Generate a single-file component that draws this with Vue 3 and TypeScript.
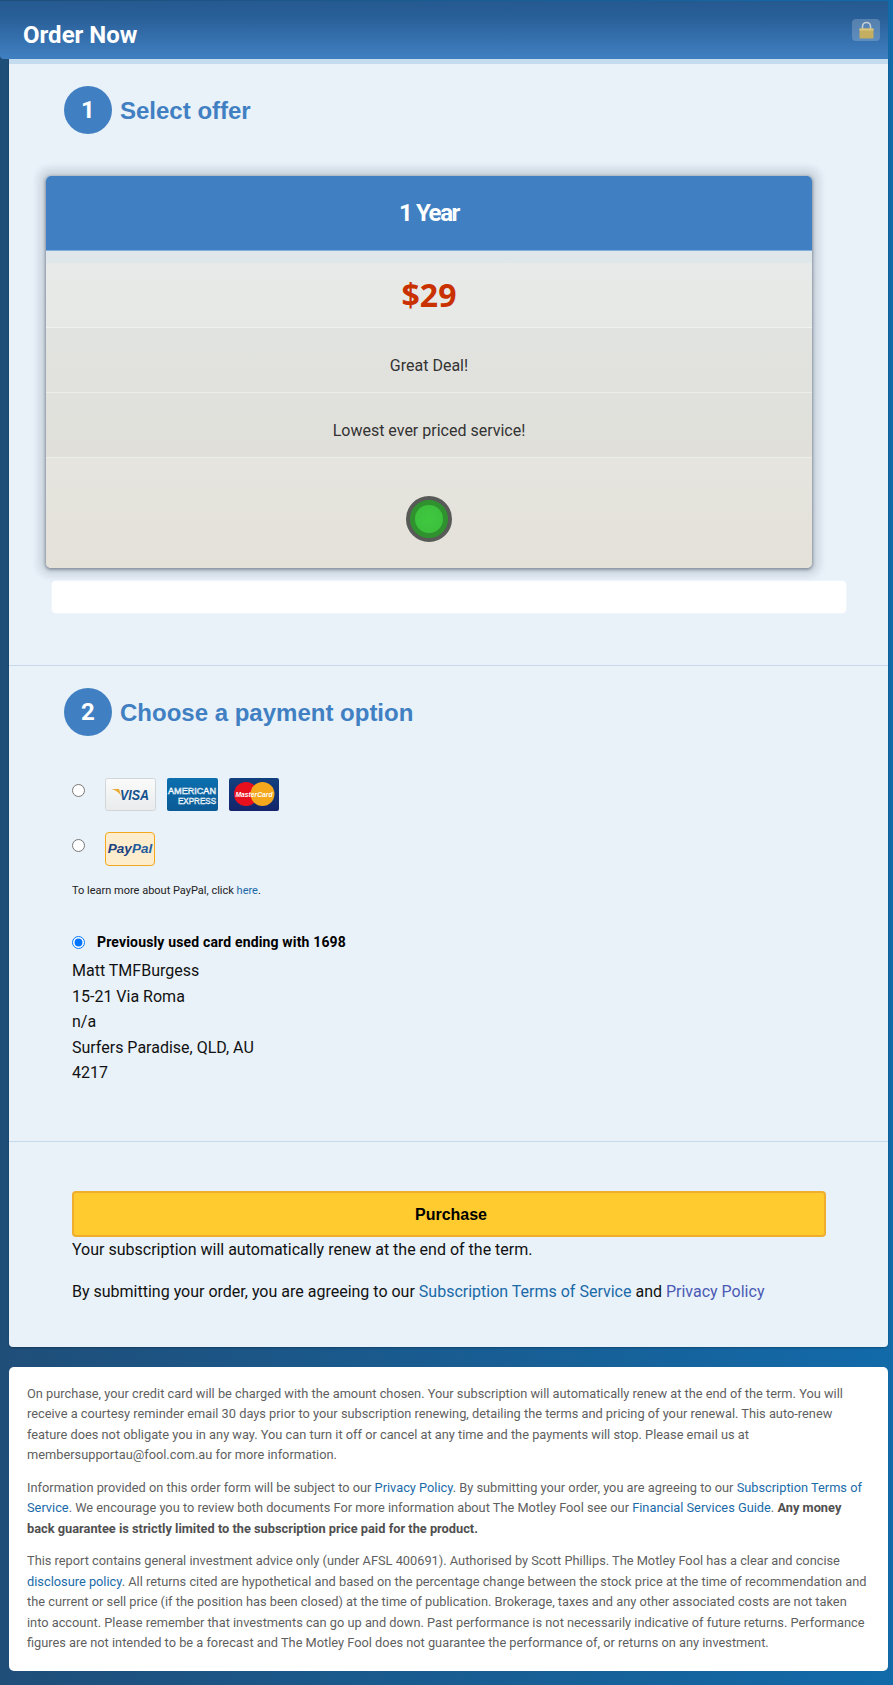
<template>
  <div class="page">
    <header class="top-bar">
      <h1 class="top-title">Order Now</h1>
      <span class="lock">
        <svg width="15" height="18" viewBox="0 0 15 18">
          <path d="M3.5 9V5.5a4 4 0 0 1 8 0V9" fill="none" stroke="#c9ced2" stroke-width="1.6" />
          <rect x="0.5" y="7.5" width="14" height="10" rx="1" fill="#c4ae62" />
          <rect x="0.5" y="7.5" width="14" height="2" fill="#d8c67f" />
        </svg>
      </span>
    </header>

    <main class="order-card">
      <section class="step step-offer">
        <div class="step-head">
          <span class="step-num">1</span>
          <h2 class="step-title">Select offer</h2>
        </div>
        <div class="offer">
          <div class="offer-name">1 Year</div>
          <div class="offer-gap"></div>
          <div class="offer-price">$29</div>
          <div class="offer-row">Great Deal!</div>
          <div class="offer-row">Lowest ever priced service!</div>
          <div class="offer-pick"><span class="led"><span class="led-core"></span></span></div>
        </div>
        <div class="notice"></div>
      </section>

      <section class="step step-pay">
        <div class="step-head">
          <span class="step-num">2</span>
          <h2 class="step-title">Choose a payment option</h2>
        </div>
        <div class="pay-row pay-cards">
          <input type="radio" name="pay" class="radio" />
          <div class="logos">
            <svg class="logo" width="51" height="33" viewBox="0 0 51 33">
              <defs>
                <linearGradient id="visaBg" x1="0" y1="0" x2="0" y2="1">
                  <stop offset="0" stop-color="#fbfbfb" />
                  <stop offset="1" stop-color="#e9ebec" />
                </linearGradient>
              </defs>
              <rect x="0.5" y="0.5" width="50" height="32" rx="2" fill="url(#visaBg)" stroke="#d3d6d8" />
              <path d="M6 11h8l2.5 8C15 15 11 12 6 11z" fill="#e8a92c" />
              <text x="15" y="22" class="visa-text" textLength="29" lengthAdjust="spacingAndGlyphs">VISA</text>
            </svg>
            <svg class="logo" width="51" height="33" viewBox="0 0 51 33">
              <defs>
                <linearGradient id="amexBg" x1="0" y1="0" x2="0" y2="1">
                  <stop offset="0" stop-color="#0c6fae" />
                  <stop offset="1" stop-color="#0a5a96" />
                </linearGradient>
              </defs>
              <rect width="51" height="33" rx="2" fill="url(#amexBg)" />
              <text x="1" y="15.5" class="amex-text" textLength="48" lengthAdjust="spacingAndGlyphs">AMERICAN</text>
              <text x="11" y="25.5" class="amex-text" textLength="38" lengthAdjust="spacingAndGlyphs">EXPRESS</text>
            </svg>
            <svg class="logo" width="50" height="33" viewBox="0 0 50 33">
              <defs>
                <linearGradient id="mcBg" x1="0" y1="0" x2="0" y2="1">
                  <stop offset="0" stop-color="#11407f" />
                  <stop offset="1" stop-color="#14246a" />
                </linearGradient>
              </defs>
              <rect width="50" height="33" rx="2" fill="url(#mcBg)" />
              <circle cx="17" cy="16" r="12" fill="#e8101c" />
              <circle cx="33.5" cy="16" r="12" fill="#f5a81c" />
              <text x="6.5" y="19" class="mc-text" textLength="37" lengthAdjust="spacingAndGlyphs">MasterCard</text>
            </svg>
          </div>
        </div>
        <div class="pay-row pay-paypal">
          <input type="radio" name="pay" class="radio" />
          <div class="paypal-logo"><em class="pp-dark">Pay</em><em class="pp-light">Pal</em></div>
        </div>
        <p class="paypal-note">To learn more about PayPal, click <a class="link">here</a>.</p>

        <label class="saved">
          <input type="radio" name="pay" class="radio" checked />
          <strong>Previously used card ending with 1698</strong>
        </label>
        <div class="address">
          <div v-for="line in addressLines" :key="line">{{ line }}</div>
        </div>
      </section>

      <section class="step step-buy">
        <button class="purchase" type="button">Purchase</button>
        <p class="renew">Your subscription will automatically renew at the end of the term.</p>
        <p class="agree">
          By submitting your order, you are agreeing to our
          <a class="link">Subscription Terms of Service</a> and
          <a class="link link-visited">Privacy Policy</a>
        </p>
      </section>
    </main>

    <footer class="legal">
      <p>On purchase, your credit card will be charged with the amount chosen. Your subscription will automatically renew at the end of the term. You will receive a courtesy reminder email 30 days prior to your subscription renewing, detailing the terms and pricing of your renewal. This auto-renew feature does not obligate you in any way. You can turn it off or cancel at any time and the payments will stop. Please email us at membersupportau@fool.com.au for more information.</p>
      <p>Information provided on this order form will be subject to our <a class="link">Privacy Policy</a>. By submitting your order, you are agreeing to our <a class="link">Subscription Terms of Service</a>. We encourage you to review both documents For more information about The Motley Fool see our <a class="link">Financial Services Guide</a>. <b>Any money back guarantee is strictly limited to the subscription price paid for the product.</b></p>
      <p>This report contains general investment advice only (under AFSL 400691). Authorised by Scott Phillips. The Motley Fool has a clear and concise <a class="link">disclosure policy</a>. All returns cited are hypothetical and based on the percentage change between the stock price at the time of recommendation and the current or sell price (if the position has been closed) at the time of publication. Brokerage, taxes and any other associated costs are not taken into account. Please remember that investments can go up and down. Past performance is not necessarily indicative of future returns. Performance figures are not intended to be a forecast and The Motley Fool does not guarantee the performance of, or returns on any investment.</p>
    </footer>
  </div>
</template>

<script setup lang="ts">
const addressLines: string[] = [
  'Matt TMFBurgess',
  '15-21 Via Roma',
  'n/a',
  'Surfers Paradise, QLD, AU',
  '4217'
]
</script>

<style>
html, body {
  margin: 0;
  background: #1a5c92;
}
</style>

<style scoped>
.page {
  min-height: 1685px;
  box-sizing: border-box;
  padding-top: 1px;
  padding-bottom: 13px;
  background: linear-gradient(90deg, #1f4e79 0%, #126aa9 100%);
  font-family: Roboto, "Liberation Sans", sans-serif;
}

.top-bar {
  height: 58px;
  margin-right: 5px;
  box-sizing: border-box;
  padding: 16px 8px 0 23px;
  display: flex;
  justify-content: space-between;
  align-items: flex-start;
  border-bottom-left-radius: 4px;
  background: linear-gradient(180deg, #245a90 0%, #2a6099 30%, #4080c2 100%);
}

.top-title {
  margin: 0;
  font-size: 24px;
  line-height: 36px;
  font-weight: 700;
  color: #fff;
}

.lock {
  width: 28px;
  height: 22px;
  margin-top: 2px;
  border-radius: 4px;
  background: rgba(255, 255, 255, 0.2);
  display: flex;
  align-items: center;
  justify-content: center;
}

.order-card {
  margin: 0 5px 0 9px;
  background: #e9f1f9;
  border-top: 5px solid #c5dbee;
  border-radius: 0 0 4px 4px;
  box-shadow: 0 1px 2px rgba(0, 0, 0, 0.25);
}

.step {
  border-bottom: 1px solid #c6d9ea;
}

.step:last-child {
  border-bottom: none;
}

.step-head {
  display: flex;
  align-items: center;
  gap: 8px;
  padding-left: 55px;
}

.step-num {
  width: 48px;
  height: 48px;
  border-radius: 50%;
  background: #4080c2;
  color: #fff;
  font-size: 24px;
  font-weight: 700;
  display: flex;
  align-items: center;
  justify-content: center;
}

.step-title {
  margin: 2px 0 0;
  font-family: "Liberation Sans", Arial, sans-serif;
  font-size: 24px;
  font-weight: 700;
  color: #4080c2;
}

.step-offer {
  height: 602px;
  box-sizing: border-box;
  padding-top: 22px;
}

.offer {
  width: 766px;
  margin: 42px 0 0 37px;
  border-radius: 5px;
  overflow: hidden;
  background: linear-gradient(180deg, #e8eded 0%, #e4e1d9 100%);
  box-shadow: 0 1px 3px 1px rgba(70, 80, 95, 0.5), 0 0 6px 6px rgba(110, 120, 140, 0.18), 0 0 4px 11px rgba(140, 150, 170, 0.08);
  position: relative;
  text-align: center;
  color: #333;
  font-size: 16px;
}

.offer-name {
  height: 74px;
  border-bottom: 1px solid #7fb0e0;
  background: #4080c2;
  color: #fff;
  font-size: 24px;
  font-weight: 700;
  line-height: 74px;
  letter-spacing: -1.4px;
}

.offer-gap {
  height: 12px;
  background: #dfe7ea;
}

.offer-price {
  height: 64px;
  border-bottom: 1px solid #eff2f1;
  font-family: "Open Sans", sans-serif;
  font-size: 32px;
  font-weight: 700;
  line-height: 64px;
  color: #c93200;
}

.offer-row {
  height: 64px;
  border-bottom: 1px solid #eceeea;
  line-height: 76px;
  background: rgba(0, 0, 0, 0.02);
}

.offer-pick {
  height: 110px;
  box-sizing: border-box;
  padding-top: 38px;
  display: flex;
  justify-content: center;
  align-items: flex-start;
}

.led {
  width: 46px;
  height: 46px;
  box-sizing: border-box;
  border: 4px solid #575a57;
  border-radius: 50%;
  background: #2f922f;
  display: flex;
  align-items: center;
  justify-content: center;
}

.led-core {
  width: 28px;
  height: 28px;
  border-radius: 50%;
  background: radial-gradient(circle, #40c840 0%, #3bbd3b 100%);
}

.notice {
  width: 794px;
  height: 32px;
  margin: 13px 0 0 43px;
  background: #fff;
  border-radius: 4px;
  box-shadow: 0 0 0 1px #f1f6fb;
}

.step-pay {
  height: 476px;
  box-sizing: border-box;
  padding: 22px 0 0 63px;
}

.step-pay .step-head {
  margin-left: -8px;
  padding-left: 0;
}

.pay-row {
  display: flex;
  align-items: flex-start;
}

.radio {
  width: 13px;
  height: 13px;
  margin: 0;
  flex: none;
  accent-color: #0075ff;
}

.pay-cards {
  margin-top: 42px;
  gap: 20px;
}

.pay-cards .radio {
  margin-top: 6px;
}

.pay-paypal {
  margin-top: 21px;
  gap: 20px;
}

.pay-paypal .radio {
  margin-top: 7px;
}

.logos {
  display: flex;
  gap: 11px;
}

.logo {
  display: block;
}

.visa-text {
  font-family: "Liberation Sans", sans-serif;
  font-size: 14.5px;
  font-style: italic;
  font-weight: 700;
  fill: #134f8c;
}

.amex-text {
  font-family: "Liberation Sans", sans-serif;
  font-size: 8.5px;
  fill: #2f82b9;
  stroke: #fff;
  stroke-width: 0.5;
}

.mc-text {
  font-family: "Liberation Sans", sans-serif;
  font-size: 7.5px;
  font-style: italic;
  font-weight: 700;
  fill: #fff;
}

.paypal-logo {
  width: 50px;
  height: 34px;
  box-sizing: border-box;
  border: 1px solid #f5a81c;
  border-radius: 4px;
  background: #fdedcc;
  font-family: "Liberation Sans", sans-serif;
  font-size: 13.5px;
  font-weight: 700;
  line-height: 32px;
  text-align: center;
}

.paypal-logo em {
  font-style: italic;
}

.pp-dark {
  color: #1b3f7f;
}

.pp-light {
  color: #1f5c9e;
}

.paypal-note {
  margin: 17px 0 0;
  font-size: 11px;
  line-height: 16px;
  color: #222;
}

.link {
  color: #1a6aa8;
  cursor: pointer;
}

.link-visited {
  color: #4a5ab4;
}

.saved {
  margin-top: 33px;
  display: flex;
  align-items: center;
  gap: 12px;
  font-size: 14px;
  line-height: 20px;
  letter-spacing: 0.16px;
  color: #000;
}

.address {
  margin-top: 6px;
  font-size: 16px;
  line-height: 25.6px;
  color: #111;
}

.step-buy {
  height: 205px;
  box-sizing: border-box;
  padding: 49px 63px 0;
}

.purchase {
  display: block;
  width: 754px;
  height: 46px;
  box-sizing: border-box;
  padding: 2px 0 0 4px;
  border: 2px solid #efae2d;
  border-radius: 4px;
  background: #ffcb2f;
  color: #000;
  font-family: "Liberation Sans", sans-serif;
  font-size: 16px;
  font-weight: 700;
  cursor: pointer;
}

.renew,
.agree {
  margin: 0;
  font-size: 16px;
  line-height: 26px;
  color: #111;
}

.agree {
  margin-top: 16px;
}

.legal {
  margin: 20px 5px 0 9px;
  padding: 17px 17px 17px 18px;
  background: #fff;
  border-radius: 5px;
  font-size: 12.8px;
  line-height: 20.48px;
  color: #5f5f5f;
}

.legal p {
  margin: 0 0 12px;
}

.legal p:last-child {
  margin-bottom: 0;
}

.legal b {
  color: #505050;
}
</style>
